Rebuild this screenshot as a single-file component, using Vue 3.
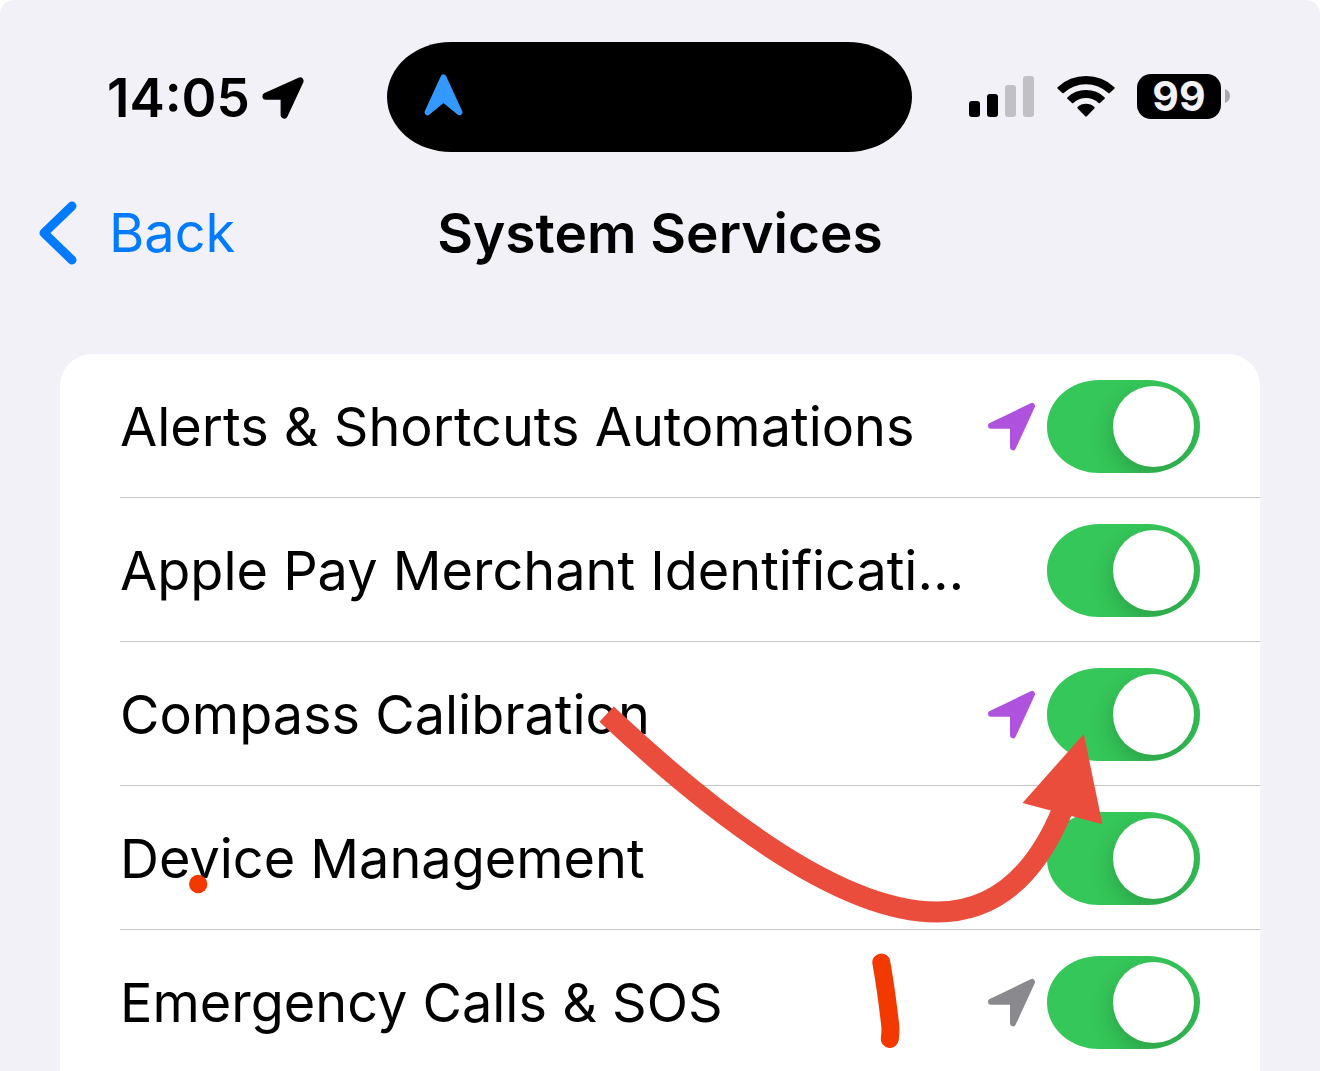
<script setup>
import { reactive } from 'vue'

const services = reactive([
  { id: 'alerts', name: 'Alerts & Shortcuts Automations', usage: 'recent', on: true },
  { id: 'apple-pay', name: 'Apple Pay Merchant Identificati…', usage: '', on: true },
  { id: 'compass', name: 'Compass Calibration', usage: 'recent', on: true },
  { id: 'device', name: 'Device Management', usage: '', on: true },
  { id: 'sos', name: 'Emergency Calls & SOS', usage: 'day', on: true },
])
</script>

<template>
  <div class="screen">
    <header class="status">
      <div class="status-left">
        <time class="clock">14:05</time>
        <svg class="clock-arrow" viewBox="0 0 42 42" aria-hidden="true">
          <path d="M4 19.2 38 4 22.2 38V19.2Z" fill="#000" stroke="#000" stroke-width="7.2" stroke-linejoin="round" />
        </svg>
      </div>
      <div class="island">
        <svg class="island-arrow" viewBox="0 0 39 42" aria-hidden="true">
          <path d="M19.5 3.4 35.4 38.3 19.5 25.1 3.6 38.3Z" fill="#3399ff" stroke="#3399ff" stroke-width="6" stroke-linejoin="round" />
        </svg>
      </div>
      <div class="status-right">
        <svg class="signal" viewBox="0 0 66 42" aria-hidden="true">
          <rect x="0" y="26" width="11" height="16" rx="3" />
          <rect x="18" y="19" width="11" height="23" rx="3" />
          <rect x="36" y="10" width="11" height="32" rx="3" fill="#c1c0c5" />
          <rect x="54" y="1" width="11" height="41" rx="3" fill="#c1c0c5" />
        </svg>
        <svg class="wifi" viewBox="0 0 58 42" aria-hidden="true">
          <path d="M.6 12.2Q0 13 .7 13.7L5.300 18Q6 18.600 6.700 17.900A33 33 0 0 1 51.300 17.900Q52 18.600 52.700 18L57.300 13.700Q58 13 57.400 12.200A41.500 41.500 0 0 0 .6 12.200Z" />
          <path d="M10.300 22.400Q9.700 23.100 10.400 23.700L15 28Q15.700 28.600 16.400 27.900A18.500 18.500 0 0 1 41.600 27.900Q42.300 28.600 43 28L47.600 23.700Q48.300 23.100 47.700 22.400A27 27 0 0 0 10.300 22.400Z" />
          <path d="M20.600 32Q20 32.700 20.700 33.400L28.200 41.200Q29 42 29.800 41.200L37.300 33.400Q38 32.700 37.400 32A12.500 12.500 0 0 0 20.600 32Z" />
        </svg>
        <div class="battery">
          <span class="battery-level">99</span>
          <svg class="battery-nub" viewBox="0 0 5 14" aria-hidden="true"><path d="M0 0Q5 2 5 7T0 14Z" /></svg>
        </div>
      </div>
    </header>

    <nav class="nav">
      <button class="back" type="button">
        <svg class="chevron" viewBox="0 0 38 64" aria-hidden="true">
          <path d="M33 5 5 32 33 59" fill="none" stroke="#007aff" stroke-width="9" stroke-linecap="round" stroke-linejoin="round" />
        </svg>
        <span>Back</span>
      </button>
      <h1 class="title">System Services</h1>
    </nav>

    <main class="list">
      <div v-for="s in services" :key="s.id" class="row">
        <label class="name" :for="s.id">{{ s.name }}</label>
        <svg v-if="s.usage" class="usage" :class="s.usage" viewBox="0 0 49 49" aria-hidden="true">
          <path d="M4 23.700 45 4 26 45.300V23.700Z" fill="currentColor" stroke="currentColor" stroke-width="6" stroke-linejoin="round" />
        </svg>
        <input :id="s.id" v-model="s.on" class="switch" type="checkbox" role="switch" />
      </div>
    </main>

    <svg class="markup" viewBox="0 0 1320 1071" aria-hidden="true">
      <path d="M606.600 714.200Q817 912 937 912Q1020 912 1062 811" fill="none" stroke="#eb4d3d" stroke-width="21" />
      <path d="M1083.800 734 1102.400 824.300 1022.500 803Z" fill="#eb4d3d" />
      <circle cx="198.200" cy="884" r="9.200" fill="#f23a00" />
      <path d="M881.300 962.500C885 983 888.500 1010 890.300 1026Q890.800 1030 889.800 1039" fill="none" stroke="#f23a00" stroke-width="18" stroke-linecap="round" />
    </svg>
  </div>
</template>

<style>
body {
  margin: 0;
  background: #fff;
}
</style>

<style scoped>
.screen {
  position: relative;
  height: 100vh;
  overflow: hidden;
  border-radius: 14px 14px 0 0;
  background: #f2f1f7;
  color: #000;
  font-family: Inter, "Liberation Sans", sans-serif;
}
.status {
  display: grid;
  grid-template-columns: 1fr 525px 1fr;
  align-items: center;
  padding: 42px 21px 0 0;
}
.status-left {
  display: flex;
  align-items: center;
  gap: 12px;
  padding: 2px 0 0 107px;
}
.clock {
  font-size: 53px;
  line-height: 64px;
  font-weight: 600;
}
.clock-arrow {
  width: 42px;
  height: 42px;
}
.island {
  display: flex;
  align-items: center;
  height: 110px;
  padding: 0 37px 4px;
  box-sizing: border-box;
  border-radius: 64px / 55px;
  background: #000;
}
.island-arrow {
  width: 39px;
  height: 42px;
}
.status-right {
  display: flex;
  align-items: center;
  justify-content: flex-end;
  gap: 22px;
  padding: 0 69px 2px 0;
}
.signal {
  width: 66px;
  height: 42px;
}
.wifi {
  width: 58px;
  height: 42px;
}
.battery {
  display: flex;
  align-items: center;
  gap: 4px;
}
.battery-level {
  width: 84px;
  border-radius: 14px;
  background: #000;
  color: #f2f1f7;
  font-size: 41px;
  line-height: 45px;
  font-weight: 700;
  text-align: center;
}
.battery-nub {
  width: 5px;
  height: 14px;
  fill: #a9a8ad;
}
.nav {
  display: grid;
  grid-template-columns: 1fr auto 1fr;
  align-items: center;
  height: 132px;
  margin-top: 15px;
  padding: 0 39px;
}
.back {
  display: flex;
  align-items: center;
  justify-self: start;
  gap: 32px;
  padding: 0;
  border: 0;
  background: none;
  color: #007aff;
  font-family: inherit;
  font-size: 54px;
  line-height: 68px;
}
.chevron {
  width: 38px;
  height: 64px;
}
.title {
  margin: 0;
  font-size: 55px;
  line-height: 68px;
  font-weight: 600;
}
.list {
  margin: 55px 60px 0;
  border-radius: 32px 32px 0 0;
  background: #fff;
}
.row {
  display: flex;
  align-items: center;
  height: 144px;
  margin-left: 60px;
  padding: 2px 60px 0 0;
  box-sizing: border-box;
  border-bottom: 1px solid #c6c6c8;
}
.row:last-child {
  border-bottom-color: transparent;
}
.name {
  flex: 1;
  white-space: nowrap;
  font-size: 54px;
  line-height: 68px;
}
.usage {
  flex: none;
  width: 49px;
  height: 49px;
  margin-right: 11px;
}
.recent {
  color: #af52de;
}
.day {
  color: #8a898e;
}
.switch {
  flex: none;
  width: 153px;
  height: 93px;
  margin: 0;
  padding: 6px;
  box-sizing: border-box;
  appearance: none;
  overflow: hidden;
  border-radius: 52px / 46px;
  background: #e9e9ea;
}
.switch::before {
  content: "";
  display: block;
  width: 81px;
  height: 81px;
  border-radius: 50%;
  background: #fff;
  box-shadow: 0 9px 24px rgba(0, 0, 0, 0.2);
}
.switch:checked {
  background: #35c759;
}
.switch:checked::before {
  margin-left: 60px;
}
.markup {
  position: absolute;
  top: 0;
  left: 0;
  width: 100%;
  pointer-events: none;
}
</style>
